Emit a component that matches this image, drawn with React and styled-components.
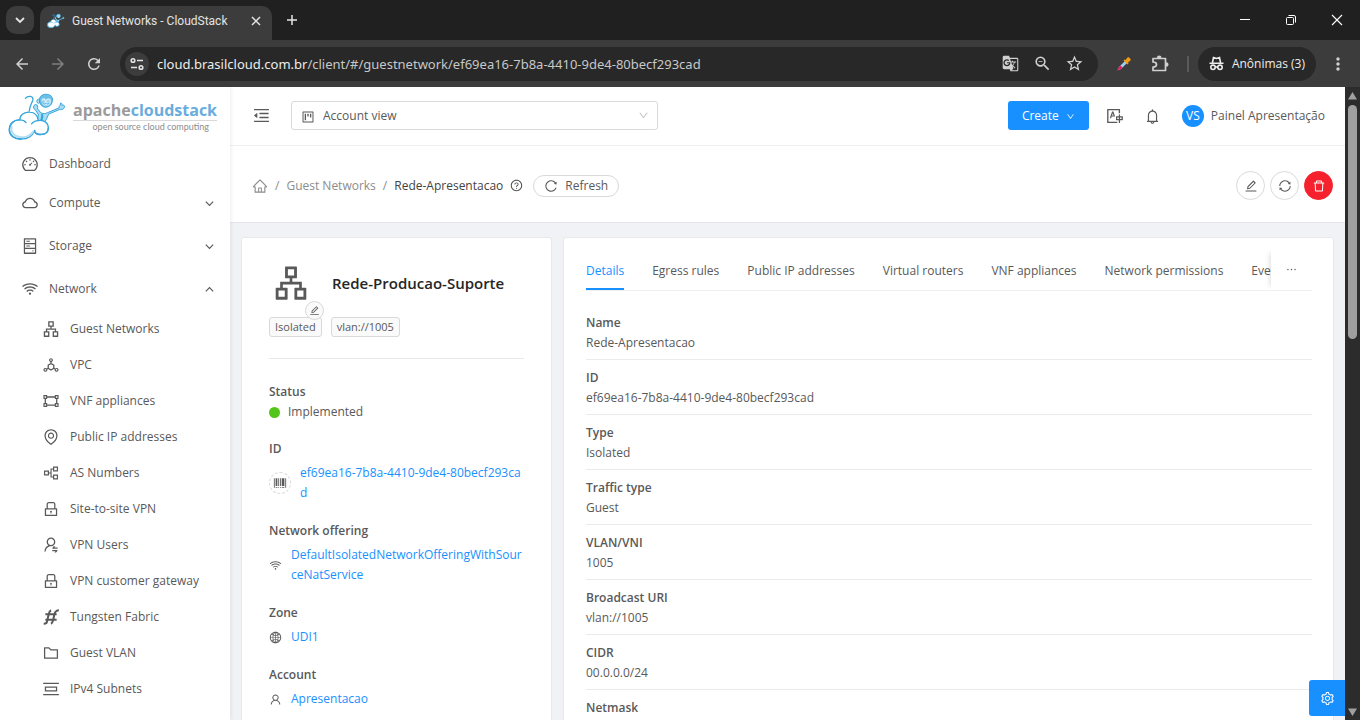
import React from "react";
import styled, { createGlobalStyle, css } from "styled-components";
import {
  AiOutlineApartment, AiOutlineBarcode, AiOutlineBell, AiOutlineCloud, AiOutlineDashboard,
  AiOutlineDelete, AiOutlineDeploymentUnit, AiOutlineDown, AiOutlineEdit, AiOutlineEllipsis,
  AiOutlineEnvironment, AiOutlineFolder, AiOutlineGateway, AiOutlineGlobal, AiOutlineHdd,
  AiOutlineHome, AiOutlineLock, AiOutlineMenuFold, AiOutlinePartition, AiOutlinePicCenter,
  AiOutlineProject, AiOutlineQuestionCircle, AiOutlineReload, AiOutlineSetting, AiOutlineSync,
  AiOutlineTranslation, AiOutlineUser, AiOutlineUserSwitch, AiOutlineWifi,
} from "react-icons/ai";
import {
  MdArrowBack, MdArrowForward, MdGTranslate, MdMoreVert, MdRefresh, MdStarBorder, MdZoomOut,
} from "react-icons/md";

const GlobalStyle = createGlobalStyle`
  *, *::before, *::after { box-sizing: border-box; }
  body { margin: 0; font-family: "Open Sans", "Noto Sans", sans-serif; font-size: 12px; line-height: 20px; color: #595959; }
  button, select { font: inherit; color: inherit; }
  button { border: 0; background: none; padding: 0; display: inline-flex; align-items: center; justify-content: center; }
  a { color: inherit; text-decoration: none; }
  svg { flex: none; display: block; }
  ul, ol, dl, dd { margin: 0; padding: 0; list-style: none; }
`;

const Window = styled.div`
  height: 100vh;
  display: flex;
  flex-direction: column;
  overflow: hidden;
  background: #3c3c3c;
`;

/* Browser frame */
const TabStrip = styled.div`
  flex: none;
  height: 40px;
  display: flex;
  align-items: center;
  padding-left: 6px;
  background: #202020;
  color: #e3e3e3;
`;
const TabSearch = styled.button`
  width: 28px;
  height: 28px;
  border-radius: 10px;
  background: #3c3c3c;
  margin-right: 6px;
`;
const BrowserTab = styled.div`
  align-self: flex-end;
  width: 232px;
  height: 34px;
  display: flex;
  align-items: center;
  gap: 7px;
  padding: 0 10px 5px 7px;
  border-radius: 10px 10px 0 0;
  background: #3c3c3c;
`;
const TabTitle = styled.span`
  flex: 1;
  font-family: Roboto, "Open Sans", sans-serif;
  white-space: nowrap;
`;
const NewTab = styled.button`
  width: 28px;
  height: 28px;
  margin-left: 6px;
`;
const WindowButtons = styled.div`
  display: flex;
  margin-left: auto;
`;
const WindowButton = styled.button`
  width: 46px;
  height: 40px;
  color: #fff;
`;
const Toolbar = styled.div`
  flex: none;
  height: 47px;
  display: flex;
  align-items: center;
  padding-left: 4px;
  background: #3c3c3c;
  color: #d0d0d0;
`;
const ToolButton = styled.button`
  width: ${(p) => p.$width || 36}px;
  height: 34px;
  opacity: ${(p) => (p.$dim ? 0.45 : 1)};
`;
const AddressBar = styled.div`
  flex: 1;
  height: 34px;
  display: flex;
  align-items: center;
  margin: 0 8px;
  padding: 0 7px 0 5px;
  border-radius: 17px;
  background: #282828;
`;
const SiteInfo = styled.button`
  width: 24px;
  height: 24px;
  border-radius: 50%;
  background: #3c3c3c;
  margin-right: 8px;
`;
const Url = styled.span`
  flex: 1;
  font-family: "Noto Sans", "Open Sans", sans-serif;
  font-size: 13px;
  color: #c7c7c7;
  white-space: nowrap;
`;
const Host = styled.span`
  color: #ededed;
`;
const Divider = styled.span`
  width: 2px;
  height: 16px;
  margin: 0 9px;
  background: #5a5a5a;
`;
const Incognito = styled.button`
  height: 34px;
  padding: 0 11px;
  gap: 8px;
  border-radius: 17px;
  background: #282828;
  color: #ededed;
`;

/* Page frame */
const Viewport = styled.div`
  flex: 1;
  min-height: 0;
  display: flex;
  background: #f0f2f5;
`;
const Sidebar = styled.aside`
  flex: none;
  width: 230px;
  overflow: hidden;
  background: #fff;
  box-shadow: 1px 0 4px rgba(0, 21, 41, 0.08);
  position: relative;
`;
const LogoLink = styled.a`
  height: 59px;
  display: flex;
  align-items: center;
  gap: 6px;
  padding-left: 8px;
`;
const LogoText = styled.span`
  display: flex;
  flex-direction: column;
  align-items: flex-end;
`;
const LogoName = styled.span`
  font-size: 16px;
  line-height: 20px;
  font-weight: 700;
  color: #9b9b9b;
  border-bottom: 1px solid #d9d9d9;
`;
const LogoBlue = styled.span`
  color: #68addd;
`;
const LogoTagline = styled.span`
  font-family: Lato, "Open Sans", sans-serif;
  font-size: 9px;
  line-height: 12px;
  padding-right: 8px;
  color: #8c8c8c;
`;
const Menu = styled.ul``;
const MenuItem = styled.li`
  margin-bottom: ${(p) => (p.$leaf ? 3 : 7)}px;
`;
const MenuLink = styled.a`
  height: 36px;
  display: flex;
  align-items: center;
  gap: 10px;
  padding: 0 15px 0 ${(p) => (p.$nested ? 42 : 21)}px;
`;
const MenuLabel = styled.span`
  flex: 1;
`;
const SubMenu = styled.ul`
  margin-top: 4px;
`;

const Main = styled.main`
  flex: 1;
  min-width: 0;
  overflow: hidden;
`;
const Header = styled.header`
  height: 59px;
  display: flex;
  align-items: center;
  padding: 0 20px 2px 22px;
  background: #fff;
  border-bottom: 1px solid #f0f0f0;
`;
const ViewSelect = styled.label`
  position: relative;
  width: 367px;
  margin-left: 21px;
`;
const SelectBox = styled.select`
  appearance: none;
  display: block;
  width: 100%;
  height: 29px;
  padding: 2px 31px 0;
  border: 1px solid #d9d9d9;
  border-radius: 3px;
  background: #fff;
`;
const SelectIcon = styled.span`
  position: absolute;
  top: 9px;
  ${(p) => (p.$end ? css`right: 9px; color: #bfbfbf;` : css`left: 10px;`)}
`;
const HeaderActions = styled.div`
  display: flex;
  align-items: center;
  margin-left: auto;
`;
const CreateButton = styled.button`
  width: 81px;
  height: 29px;
  gap: 7px;
  padding-top: 2px;
  border-radius: 3px;
  background: #1890ff;
  color: #fff;
`;
const ToolGroup = styled.div`
  display: flex;
  align-items: center;
  gap: 20px;
  padding-top: 2px;
  margin-left: 17px;
`;
const IconButton = styled.button`
  width: 18px;
  height: 30px;
`;
const UserButton = styled.button`
  gap: 7px;
`;
const Avatar = styled.span`
  width: 22px;
  height: 22px;
  border-radius: 50%;
  background: #1890ff;
  color: #fff;
  line-height: 22px;
  text-align: center;
`;

const PageHead = styled.div`
  height: 77px;
  display: flex;
  align-items: center;
  padding: 3px 12px 0 22px;
  background: #fff;
  border-bottom: 1px solid #e4e6e9;
`;
const Breadcrumb = styled.ol`
  display: flex;
  align-items: center;
  gap: 7px;
  color: #8c8c8c;
`;
const Crumb = styled.li`
  display: flex;
  align-items: center;
  gap: 7px;
  color: ${(p) => (p.$current ? "#434343" : "inherit")};
`;
const RefreshButton = styled.button`
  height: 22px;
  gap: 7px;
  padding: 0 10px;
  margin-left: 10px;
  border: 1px solid #d9d9d9;
  border-radius: 11px;
`;
const ResourceActions = styled.div`
  display: flex;
  gap: 5px;
  margin-left: auto;
`;
const RoundButton = styled.button`
  width: 29px;
  height: 29px;
  border-radius: 50%;
  border: 1px solid ${(p) => (p.$danger ? "#f5222d" : "#d9d9d9")};
  background: ${(p) => (p.$danger ? "#f5222d" : "#fff")};
  color: ${(p) => (p.$danger ? "#fff" : "#595959")};
`;

const Columns = styled.div`
  display: grid;
  grid-template-columns: 311px minmax(0, 1fr);
  gap: 11px;
  padding: 14px 11px 0;
`;
const Card = styled.section`
  background: #fff;
  border: 1px solid #e8e8e8;
  border-radius: 3px;
  min-height: 100vh;
`;
const InfoCard = styled(Card)`
  padding: 24px 27px;
`;
const ResourceHead = styled.div`
  display: flex;
  align-items: center;
  gap: 22px;
  height: 41px;
`;
const ResourceIcon = styled.div`
  position: relative;
  width: 41px;
  padding-left: 3px;
  color: #595959;
`;
const EditBadge = styled.button`
  position: absolute;
  left: 36px;
  top: 37px;
  width: 19px;
  height: 19px;
  border: 1px solid #d9d9d9;
  border-radius: 50%;
  background: #fafafa;
`;
const ResourceName = styled.h1`
  margin: 0;
  font-size: 15px;
  font-weight: 600;
  color: #262626;
`;
const Tags = styled.div`
  display: flex;
  gap: 9px;
  margin-top: 14px;
  padding-bottom: 21px;
  border-bottom: 1px solid #e8e8e8;
  margin-bottom: 23px;
`;
const Tag = styled.span`
  height: 20px;
  padding: 0 5px;
  font-size: 11px;
  line-height: 18px;
  border: 1px solid #d9d9d9;
  border-radius: 3px;
  background: #fafafa;
`;
const InfoItem = styled.div`
  margin-bottom: ${(p) => (p.$plain ? 17 : 18)}px;
`;
const Term = styled.dt`
  font-weight: 600;
`;
const InfoValue = styled.dd`
  display: flex;
  align-items: center;
  gap: ${(p) => (p.$plain ? 8 : 9)}px;
  margin-top: ${(p) => (p.$plain ? 0 : 4)}px;
`;
const InfoLink = styled.a`
  flex: 1;
  min-width: 0;
  color: #1890ff;
  word-break: break-all;
`;
const StatusDot = styled.span`
  width: 11px;
  height: 11px;
  border-radius: 50%;
  background: #52c41a;
`;
const CopyButton = styled.button`
  flex: none;
  width: 22px;
  height: 22px;
  border: 1px dashed #d9d9d9;
  border-radius: 50%;
`;

const DetailCard = styled(Card)`
  padding: 11px 21px 0 22px;
`;
const TabBar = styled.div`
  height: 42px;
  display: flex;
  border-bottom: 1px solid #f0f0f0;
`;
const TabList = styled.div`
  flex: 1;
  min-width: 0;
  display: flex;
  gap: 28px;
  overflow: hidden;
`;
const Tab = styled.button`
  flex: none;
  height: 41px;
  padding-top: 4px;
  white-space: nowrap;
  border-bottom: 2px solid ${(p) => (p.$active ? "#1890ff" : "transparent")};
  color: ${(p) => (p.$active ? "#1890ff" : "inherit")};
`;
const MoreTabs = styled.button`
  width: 41px;
  box-shadow: -5px 0 5px -4px rgba(0, 0, 0, 0.14);
`;
const DetailList = styled.dl`
  margin-top: 14px;
`;
const DetailRow = styled.div`
  padding: 8px 0 6px;
  min-height: 55px;
  border-bottom: 1px solid #ebebeb;
`;

const SettingsButton = styled.button`
  position: fixed;
  right: 15px;
  bottom: 4px;
  width: 36px;
  height: 36px;
  border-radius: 3px 0 0 3px;
  background: #1890ff;
  color: #fff;
`;
const Scrollbar = styled.div`
  flex: none;
  width: 15px;
  display: flex;
  flex-direction: column;
  align-items: center;
  justify-content: space-between;
  padding: 5px 0 4px;
  background: #2c2c2c;
`;
const ScrollTop = styled.div`
  display: flex;
  flex-direction: column;
  align-items: center;
  gap: 5px;
`;
const Thumb = styled.div`
  width: 9px;
  height: 234px;
  border-radius: 5px;
  background: #9f9f9f;
`;

/* Drawings */
const Mascot = ({ width, height, bold }) => (
  <svg width={width} height={height} viewBox="24 276 180 146" fill="none" stroke="#35a5db" strokeWidth={bold ? 6 : 4} strokeLinecap="round" strokeLinejoin="round">
    <path d="M77 292c8-9 25-8 23 5-2 9-10 16-11 34" />
    <path d="M116 340l-8-12c-8-3-8-16 0-17 7 0 8 8 6 13l10 12c8 4 14 3 20 0l36-15c-1-4 1-6 3-8l2-7c4 1 4 5 3 7h6c4 1 2 8 0 10-4 4-8 4-12 3l-34 14c-4 10-8 20-14 28l-20-4z" fill="#a9dbf3" strokeWidth="3" />
    <path d="M128 342c2 10-2 18-6 24" strokeWidth="6" />
    <ellipse cx="117" cy="301" rx="5" ry="6" fill="#b9e0f4" strokeWidth="3" />
    <path d="M120 300c-2-16 12-22 24-20 12 1 18 10 15 22-2 12-12 18-22 17-9-1-16-8-17-19z" fill="#6cc0e8" strokeWidth="3" />
    <path d="M127 303c-3-8 2-13 8-11 3 1 4 3 5 5 2-5 12-6 15 0 2 11-6 19-16 19-7-1-11-7-12-13z" fill="#cdeaf8" stroke="none" />
    <path d="M129 301q3-4 6 0M144 301q3-4 6 0" strokeWidth="2" />
    <path d="M131 306c6 3 13 3 18 0-1 9-15 10-18 0z" fill="#fff" strokeWidth="2" />
    <path d="M66 416c-24 2-38-12-38-28 0-18 14-31 32-30 0-16 14-25 30-24 16 0 26 12 26 26 18-4 31 8 31 22 0 12-8 20-20 20-14 2-22-4-22-12-8 20-22 26-39 26z" fill="#fff" />
    <path d="M35 378c-4 18 8 31 28 33 18 1 30-6 38-18" stroke="#b4def3" strokeWidth="6" />
    <path d="M66 416c-24 2-38-12-38-28 0-18 14-31 32-30 8 0 14 2 19 8M116 360c-10 0-16 4-20 10M105 390c0 8 8 14 22 12 12 0 20-8 20-20" />
  </svg>
);
const TuneIcon = () => (
  <svg width="16" height="16" viewBox="0 0 16 16" fill="none" stroke="#e3e3e3" strokeWidth="1.6">
    <circle cx="4" cy="4.5" r="1.8" /><path d="M8 4.5h6M2 11.5h6" /><circle cx="12" cy="11.5" r="1.8" />
  </svg>
);
const PuzzleIcon = () => (
  <svg width="18" height="18" viewBox="0 0 18 18" fill="none" stroke="currentColor" strokeWidth="1.7" strokeLinejoin="round">
    <path d="M2 3.500h12.500v12H2v-3.500c2.500 0 3.500-1 3.500-2.500S4.500 7 2 7z" />
    <path d="M6.500 3a1.700 1.700 0 0 1 3.400 0zM15 7.800a1.700 1.700 0 0 1 0 3.400z" fill="currentColor" stroke="none" />
    <path d="M6.700 2.800a1.500 1.500 0 0 1 3 0M15.200 8a1.500 1.500 0 0 1 0 3" />
  </svg>
);
const PickerIcon = () => (
  <svg width="16" height="16" viewBox="0 0 16 16">
    <path d="M1.500 14.500l1.500-3.500 6-6 2 2-6 6z" fill="#9bd0f2" />
    <path d="M1.500 14.500l1.500-3.500 1.500-1.500 2 2L5 13z" fill="#e91e63" />
    <path d="M7.500 4.500l1-1 1 .5 2-2.500c1-1 4 1.500 3 3L12 6.500l.5 1-1 1z" fill="#f59a12" />
  </svg>
);
const IncognitoIcon = () => (
  <svg width="15" height="15" viewBox="0 0 15 15" fill="none" stroke="#ededed" strokeWidth="1.6">
    <path d="M3.500 6.500l1-5 3 1 3-1 1 5M.5 7.200h14" />
    <circle cx="4" cy="11.300" r="2.200" /><circle cx="11" cy="11.300" r="2.200" /><path d="M6 11h3" />
  </svg>
);
const LineIcon = ({ d, size = 12, stroke = 1.2, color = "currentColor" }) => (
  <svg width={size} height={size} viewBox="0 0 12 12" fill="none" stroke={color} strokeWidth={stroke}><path d={d} /></svg>
);
const TungstenIcon = ({ size = 16 }) => (
  <svg width={size} height={size} viewBox="0 0 16 16" fill="none" stroke="currentColor" strokeWidth="1.8">
    <path d="M3 5.500h10M3 10.500h10M1.500 14c3 0 2.700-1 3.500-4.500l1-4C6.500 3 7 2.500 8 2M8 14c1-.5 1.500-1.500 2-3.500l1-5C11.800 3 12.500 2 15 2" />
  </svg>
);
const Arrow = ({ up }) => (
  <svg width="9" height="8" viewBox="0 0 9 8" fill="#9f9f9f"><path d={up ? "M4.500 0L9 7.500H0z" : "M0 .5h9L4.500 8z"} /></svg>
);

const chevronDown = "M2 4l4 4 4-4";
const chevronUp = "M2 8l4-4 4 4";

const topItems = [
  { label: "Dashboard", icon: AiOutlineDashboard, leaf: true },
  { label: "Compute", icon: AiOutlineCloud },
  { label: "Storage", icon: AiOutlineHdd },
  {
    label: "Network",
    icon: AiOutlineWifi,
    children: [
      ["Guest Networks", AiOutlineApartment],
      ["VPC", AiOutlineDeploymentUnit],
      ["VNF appliances", AiOutlineGateway],
      ["Public IP addresses", AiOutlineEnvironment],
      ["AS Numbers", AiOutlinePartition],
      ["Site-to-site VPN", AiOutlineLock],
      ["VPN Users", AiOutlineUserSwitch],
      ["VPN customer gateway", AiOutlineLock],
      ["Tungsten Fabric", TungstenIcon],
      ["Guest VLAN", AiOutlineFolder],
      ["IPv4 Subnets", AiOutlinePicCenter],
    ],
  },
];
const tabs = ["Details", "Egress rules", "Public IP addresses", "Virtual routers", "VNF appliances", "Network permissions", "Events"];
const details = [
  ["Name", "Rede-Apresentacao"],
  ["ID", "ef69ea16-7b8a-4410-9de4-80becf293cad"],
  ["Type", "Isolated"],
  ["Traffic type", "Guest"],
  ["VLAN/VNI", "1005"],
  ["Broadcast URI", "vlan://1005"],
  ["CIDR", "00.0.0.0/24"],
  ["Netmask", ""],
];

function BrowserFrame() {
  return (
    <>
      <TabStrip>
        <TabSearch aria-label="Search tabs"><LineIcon d={chevronDown} stroke={1.8} /></TabSearch>
        <BrowserTab>
          <Mascot width={18} height={16} bold />
          <TabTitle>Guest Networks - CloudStack</TabTitle>
          <button aria-label="Close tab"><LineIcon d="M2 2l8 8M10 2l-8 8" stroke={1.5} /></button>
        </BrowserTab>
        <NewTab aria-label="New tab"><LineIcon d="M6 1v10M1 6h10" stroke={1.5} /></NewTab>
        <WindowButtons>
          <WindowButton aria-label="Minimize"><LineIcon d="M1 5.5h10" stroke={1} /></WindowButton>
          <WindowButton aria-label="Restore"><LineIcon d="M1.5 4.5a1 1 0 0 1 1-1h5a1 1 0 0 1 1 1v5a1 1 0 0 1-1 1h-5a1 1 0 0 1-1-1zM3.5 1.5H9A1.5 1.5 0 0 1 10.500 3v5.500" stroke={1} /></WindowButton>
          <WindowButton aria-label="Close"><LineIcon d="M1 1l10 10M11 1L1 11" stroke={1.1} /></WindowButton>
        </WindowButtons>
      </TabStrip>
      <Toolbar>
        <ToolButton aria-label="Back"><MdArrowBack size={18} /></ToolButton>
        <ToolButton aria-label="Forward" $dim><MdArrowForward size={18} /></ToolButton>
        <ToolButton aria-label="Reload"><MdRefresh size={18} /></ToolButton>
        <AddressBar>
          <SiteInfo aria-label="Site information"><TuneIcon /></SiteInfo>
          <Url><Host>cloud.brasilcloud.com.br</Host>/client/#/guestnetwork/ef69ea16-7b8a-4410-9de4-80becf293cad</Url>
          <ToolButton $width={32} aria-label="Translate"><MdGTranslate size={17} /></ToolButton>
          <ToolButton $width={32} aria-label="Zoom"><MdZoomOut size={19} /></ToolButton>
          <ToolButton $width={32} aria-label="Bookmark"><MdStarBorder size={19} /></ToolButton>
        </AddressBar>
        <ToolButton aria-label="Color picker"><PickerIcon /></ToolButton>
        <ToolButton aria-label="Extensions"><PuzzleIcon /></ToolButton>
        <Divider />
        <Incognito><IncognitoIcon />Anônimas (3)</Incognito>
        <ToolButton $width={44} aria-label="Menu"><MdMoreVert size={20} /></ToolButton>
      </Toolbar>
    </>
  );
}

function Navigation() {
  return (
    <Sidebar>
      <LogoLink href="#/">
        <Mascot width={59} height={48} />
        <LogoText>
          <LogoName>apache<LogoBlue>cloudstack</LogoBlue></LogoName>
          <LogoTagline>open source cloud computing</LogoTagline>
        </LogoText>
      </LogoLink>
      <nav>
        <Menu>
          {topItems.map(({ label, icon: Icon, leaf, children }) => (
            <MenuItem key={label} $leaf={leaf}>
              <MenuLink href="#/">
                <Icon size={18} />
                <MenuLabel>{label}</MenuLabel>
                {!leaf && <LineIcon d={children ? chevronUp : chevronDown} stroke={1.3} size={11} />}
              </MenuLink>
              {children && (
                <SubMenu>
                  {children.map(([name, SubIcon]) => (
                    <li key={name}>
                      <MenuLink href="#/" $nested><SubIcon size={18} /><MenuLabel>{name}</MenuLabel></MenuLink>
                    </li>
                  ))}
                </SubMenu>
              )}
            </MenuItem>
          ))}
        </Menu>
      </nav>
    </Sidebar>
  );
}

function HeaderTools() {
  return (
    <ToolGroup>
      <IconButton aria-label="Language"><AiOutlineTranslation size={18} /></IconButton>
      <IconButton aria-label="Notifications"><AiOutlineBell size={17} /></IconButton>
      <UserButton><Avatar>VS</Avatar>Painel Apresentação</UserButton>
    </ToolGroup>
  );
}

function InfoPanel() {
  return (
    <InfoCard>
      <ResourceHead>
        <ResourceIcon>
          <AiOutlineApartment size={38} />
          <EditBadge aria-label="Edit icon"><AiOutlineEdit size={11} /></EditBadge>
        </ResourceIcon>
        <ResourceName>Rede-Producao-Suporte</ResourceName>
      </ResourceHead>
      <Tags><Tag>Isolated</Tag><Tag>vlan://1005</Tag></Tags>
      <dl>
        <InfoItem $plain>
          <Term>Status</Term>
          <InfoValue $plain><StatusDot />Implemented</InfoValue>
        </InfoItem>
        <InfoItem>
          <Term>ID</Term>
          <InfoValue>
            <CopyButton aria-label="Copy ID"><AiOutlineBarcode size={14} /></CopyButton>
            <InfoLink href="#/">ef69ea16-7b8a-4410-9de4-80becf293cad</InfoLink>
          </InfoValue>
        </InfoItem>
        <InfoItem>
          <Term>Network offering</Term>
          <InfoValue>
            <AiOutlineWifi size={13} />
            <InfoLink href="#/">DefaultIsolatedNetworkOfferingWithSourceNatService</InfoLink>
          </InfoValue>
        </InfoItem>
        <InfoItem>
          <Term>Zone</Term>
          <InfoValue><AiOutlineGlobal size={13} /><InfoLink href="#/">UDI1</InfoLink></InfoValue>
        </InfoItem>
        <InfoItem>
          <Term>Account</Term>
          <InfoValue><AiOutlineUser size={13} /><InfoLink href="#/">Apresentacao</InfoLink></InfoValue>
        </InfoItem>
      </dl>
    </InfoCard>
  );
}

function DetailPanel() {
  return (
    <DetailCard>
      <TabBar>
        <TabList role="tablist">
          {tabs.map((name, i) => <Tab key={name} role="tab" aria-selected={i === 0} $active={i === 0}>{name}</Tab>)}
        </TabList>
        <MoreTabs aria-label="More tabs"><AiOutlineEllipsis size={13} /></MoreTabs>
      </TabBar>
      <DetailList>
        {details.map(([term, value]) => (
          <DetailRow key={term}><Term>{term}</Term><dd>{value}</dd></DetailRow>
        ))}
      </DetailList>
    </DetailCard>
  );
}

export default function App() {
  return (
    <Window>
      <GlobalStyle />
      <BrowserFrame />
      <Viewport>
        <Navigation />
        <Main>
          <Header>
            <IconButton aria-label="Collapse menu"><AiOutlineMenuFold size={19} /></IconButton>
            <ViewSelect>
              <SelectBox aria-label="View" defaultValue="account"><option value="account">Account view</option></SelectBox>
              <SelectIcon><AiOutlineProject size={14} /></SelectIcon>
              <SelectIcon $end><AiOutlineDown size={11} /></SelectIcon>
            </ViewSelect>
            <HeaderActions>
              <CreateButton>Create<AiOutlineDown size={9} /></CreateButton>
              <HeaderTools />
            </HeaderActions>
          </Header>
          <PageHead>
            <Breadcrumb>
              <Crumb><a href="#/" aria-label="Home"><AiOutlineHome size={16} /></a>/</Crumb>
              <Crumb><a href="#/">Guest Networks</a>/</Crumb>
              <Crumb $current>Rede-Apresentacao<AiOutlineQuestionCircle size={13} /></Crumb>
            </Breadcrumb>
            <RefreshButton><AiOutlineReload size={14} />Refresh</RefreshButton>
            <ResourceActions>
              <RoundButton aria-label="Edit"><AiOutlineEdit size={14} /></RoundButton>
              <RoundButton aria-label="Restart"><AiOutlineSync size={14} /></RoundButton>
              <RoundButton aria-label="Delete" $danger><AiOutlineDelete size={14} /></RoundButton>
            </ResourceActions>
          </PageHead>
          <Columns>
            <InfoPanel />
            <DetailPanel />
          </Columns>
        </Main>
        <Scrollbar>
          <ScrollTop><Arrow up /><Thumb /></ScrollTop>
          <Arrow />
        </Scrollbar>
      </Viewport>
      <SettingsButton aria-label="Settings"><AiOutlineSetting size={15} /></SettingsButton>
    </Window>
  );
}
